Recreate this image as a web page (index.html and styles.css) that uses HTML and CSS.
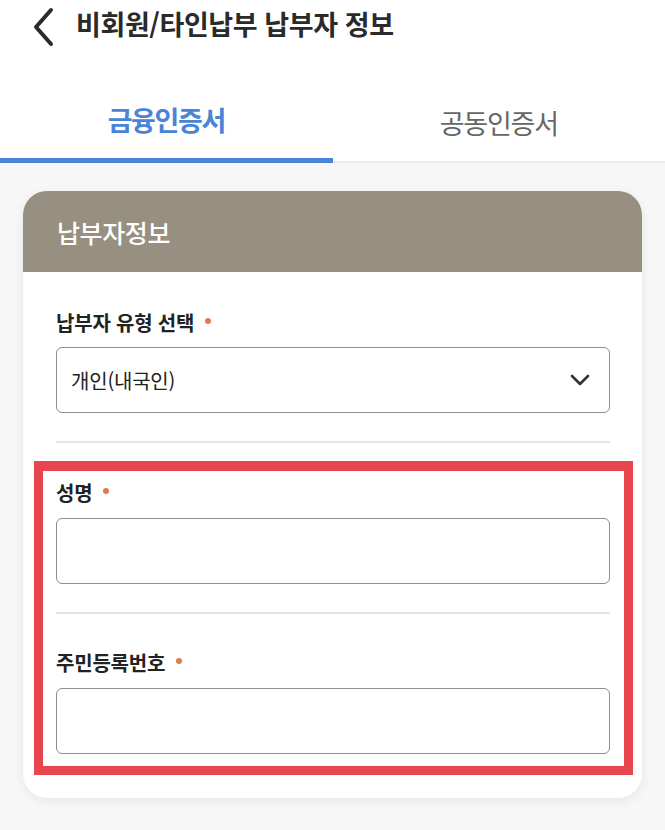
FILE: index.html
```html
<!DOCTYPE html>
<html lang="ko">
<head>
<meta charset="utf-8">
<title>비회원/타인납부 납부자 정보</title>
<link rel="stylesheet" href="styles.css">
</head>
<body>
<header class="topbar">
  <button class="back" aria-label="뒤로">
    <svg width="22" height="40" viewBox="0 0 22 40"><path d="M19 3 L4 20 L19 37" fill="none" stroke="#2b2b2b" stroke-width="4" stroke-linecap="round" stroke-linejoin="round"/></svg>
  </button>
  <h1 class="title">비회원/타인납부 납부자 정보</h1>
</header>
<nav class="tabs">
  <div class="tab active">금융인증서</div>
  <div class="tab">공동인증서</div>
</nav>
<main class="content">
  <section class="card">
    <div class="card-head">납부자정보</div>
    <div class="card-body">
      <div class="field">
        <div class="label">납부자 유형 선택<span class="req"></span></div>
        <div class="select">
          <span>개인(내국인)</span>
          <svg width="20" height="12" viewBox="0 0 20 12"><path d="M2 2 L10 10 L18 2" fill="none" stroke="#333" stroke-width="2.6" stroke-linecap="round" stroke-linejoin="round"/></svg>
        </div>
      </div>
      <hr class="divider">
      <div class="highlight">
        <div class="field">
          <div class="label">성명<span class="req"></span></div>
          <div class="input"></div>
        </div>
        <hr class="divider inner">
        <div class="field second">
          <div class="label">주민등록번호<span class="req"></span></div>
          <div class="input"></div>
        </div>
      </div>
    </div>
  </section>
</main>
</body>
</html>
```
FILE: styles.css
```css
* { box-sizing: border-box; }
html, body { margin: 0; padding: 0; }
body {
  width: 665px;
  min-height: 830px;
  background: #f7f7f7;
  font-family: "Noto Sans CJK KR", "Noto Sans", sans-serif;
  color: #222;
}
.topbar {
  height: 48px;
  background: #fff;
  display: flex;
  align-items: center;
  padding-left: 32px;
}
.back {
  border: 0;
  background: none;
  padding: 0;
  margin: 6px 0 0 0;
  width: 22px;
  height: 40px;
  display: flex;
}
.title {
  margin: 0 0 0 22px;
  font-size: 27px;
  font-weight: 700;
  letter-spacing: -0.4px;
  color: #2a2a2a;
  line-height: 36px;
}
.tabs {
  display: flex;
  height: 115px;
  background: #fff;
  border-bottom: 2px solid #ebebeb;
}
.tab {
  flex: 1;
  display: flex;
  align-items: flex-end;
  justify-content: center;
  padding-bottom: 20px;
  font-size: 27px;
  line-height: 36px;
  letter-spacing: -1.2px;
  color: #666;
  font-weight: 400;
}
.tab.active {
  color: #4a84d9;
  font-weight: 700;
  letter-spacing: -1.4px;
  border-bottom: 5px solid #4a84d9;
  margin-bottom: -2px;
}
.content {
  padding: 28px 23px 32px;
}
.card {
  background: #fff;
  border-radius: 24px;
  overflow: hidden;
  box-shadow: 0 3px 12px rgba(0,0,0,0.07);
}
.card-head {
  height: 81px;
  background: #978f80;
  color: #fff;
  font-size: 25px;
  font-weight: 500;
  letter-spacing: -0.4px;
  display: flex;
  align-items: center;
  padding-left: 34px;
  padding-top: 0;
}
.card-body {
  padding: 37px 32px 23px 33px;
}
.label {
  font-size: 20px;
  line-height: 28px;
  font-weight: 700;
  letter-spacing: -0.2px;
  color: #222;
  display: flex;
  align-items: center;
}
.req {
  width: 6px;
  height: 6px;
  border-radius: 50%;
  background: #e37a4c;
  margin-left: 11px;
  margin-top: -4px;
}
.select, .input {
  margin-top: 10px;
  height: 66px;
  border: 1.5px solid #8d8d8d;
  border-radius: 6px;
  background: #fff;
}
.select {
  display: flex;
  align-items: center;
  justify-content: space-between;
  padding: 0 19px 0 14px;
  font-size: 20px;
  letter-spacing: -0.2px;
  color: #222;
}
.input { margin-top: 11px; }
.divider {
  margin: 28px 0 0;
  border: 0;
  height: 2px;
  background: #e4e4e4;
}
.highlight {
  margin: 18px -23px 0 -22px;
  border: 9px solid #e8464e;
  border-top-width: 10px;
  padding: 8px 14px 12px 13px;
}
.field.second { margin-top: 35px; }
```
